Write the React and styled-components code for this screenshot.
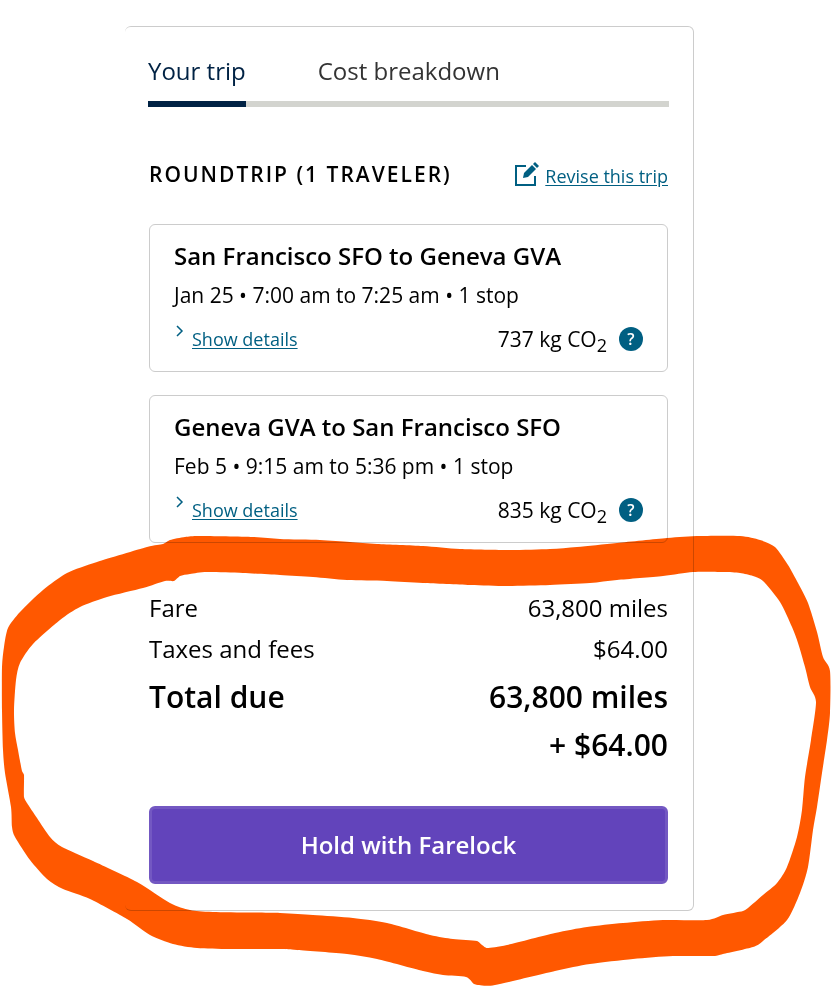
import React from 'react';
import styled, { createGlobalStyle } from 'styled-components';

const colors = {
  navy: '#002244',
  teal: '#005f82',
  text: '#000000',
  textTab: '#333333',
  border: '#cccccc',
  track: '#d3d4cf',
  purple: '#6244bb',
  purpleLight: '#7358c2',
  ink: '#ff5800',
};

const GlobalStyle = createGlobalStyle`
  * {
    box-sizing: border-box;
  }

  body {
    margin: 0;
    background: #ffffff;
    color: ${colors.text};
    font-family: 'Open Sans', 'Noto Sans', sans-serif;
    font-weight: 400;
  }
`;

const Page = styled.div`
  position: relative;
  padding: 26px 137px 75px 125px;
`;

const Card = styled.main`
  padding: 24px 24px 26px 23px;
  border: 1px solid ${colors.border};
  border-left: none;
  border-radius: 6px;
`;

const Tabs = styled.div`
  display: flex;
  gap: 72px;
  box-shadow: inset 0 -6px ${colors.track};
`;

const Tab = styled.button`
  height: 56px;
  padding: 0 0 10px;
  background: none;
  border: none;
  border-bottom: 6px solid ${({ $active }) => ($active ? colors.navy : 'transparent')};
  color: ${({ $active }) => ($active ? colors.navy : colors.textTab)};
  font: inherit;
  font-size: 24px;
  line-height: 36px;
  white-space: nowrap;
  cursor: pointer;
`;

const Body = styled.div`
  padding: 0 1px;
`;

const TripHeader = styled.div`
  display: flex;
  align-items: center;
  justify-content: space-between;
  padding: 51px 0 34px;
`;

const TripTitle = styled.h2`
  margin: 0;
  font-size: 21px;
  font-weight: 600;
  line-height: 32px;
  letter-spacing: 2px;
  text-transform: uppercase;
`;

const Link = styled.a`
  color: ${colors.teal};
  font-size: 18px;
  line-height: 30px;
  text-decoration: underline;
  text-underline-offset: 2px;
`;

const ReviseLink = styled(Link)`
  display: flex;
  align-items: flex-end;
  gap: 6px;
  padding-top: 4px;
  line-height: 28px;

  svg {
    flex: none;
    margin-bottom: 4px;
  }
`;

const Legs = styled.div`
  display: flex;
  flex-direction: column;
  gap: 23px;
`;

const Leg = styled.section`
  padding: 13px 24px 9px;
  border: 1px solid ${colors.border};
  border-radius: 6px;
`;

const LegTitle = styled.h3`
  margin: 0;
  font-size: 24px;
  font-weight: 600;
  line-height: 36px;
`;

const LegTimes = styled.p`
  margin: 0;
  font-size: 21px;
  line-height: 42px;
`;

const LegFooter = styled.div`
  display: flex;
  align-items: center;
  justify-content: space-between;
  height: 46px;
`;

const Details = styled.div`
  display: flex;
  align-items: center;
  gap: 6px;

  svg {
    align-self: flex-start;
  }
`;

const Emissions = styled.div`
  display: flex;
  align-items: center;
  gap: 12px;
  font-size: 21px;
  line-height: 24px;

  sub {
    font-size: 18px;
    line-height: 0;
  }
`;

const HelpButton = styled.button`
  width: 24px;
  height: 24px;
  padding: 0;
  background: ${colors.teal};
  border: none;
  border-radius: 50%;
  color: #ffffff;
  font: inherit;
  font-size: 16px;
  font-weight: 600;
  line-height: 24px;
  cursor: pointer;
`;

const Prices = styled.dl`
  margin: 0;
  padding: 44px 0 37px;
`;

const PriceRow = styled.div`
  display: flex;
  justify-content: space-between;
  font-size: ${({ $total }) => ($total ? '30px' : '24px')};
  font-weight: ${({ $total }) => ($total ? 600 : 400)};
  line-height: ${({ $total }) => ($total ? '48px' : '41px')};
  padding-top: ${({ $total }) => ($total ? '4px' : '0')};

  dd {
    margin: 0;
    text-align: right;
  }

  span {
    display: block;
  }
`;

const HoldButton = styled.button`
  display: block;
  width: 100%;
  height: 78px;
  padding: 0 0 2px;
  background: ${colors.purple};
  border: 3px solid ${colors.purpleLight};
  border-radius: 6px;
  color: #ffffff;
  font: inherit;
  font-size: 24px;
  font-weight: 600;
  cursor: pointer;
`;

const Ink = styled.svg`
  position: absolute;
  top: 0;
  left: 0;
  width: 100%;
  pointer-events: none;
  mix-blend-mode: multiply;
`;

const outerEdge = [
  [200, 536], [185, 537], [170, 540], [163, 544], [147, 547], [97, 562], [67, 573], [43, 590],
  [20, 612], [8, 628], [4, 647], [2, 667], [2, 710], [3, 750], [5, 773], [11, 807], [12, 827],
  [15, 837], [30, 860], [47, 879], [63, 889], [90, 899], [127, 919], [150, 935], [173, 944],
  [197, 948], [230, 949], [280, 949], [297, 950], [347, 954], [377, 959], [423, 971], [443, 975],
  [466, 977], [474, 984], [479, 985], [495, 985], [555, 971], [590, 964], [633, 959], [673, 956],
  [713, 956], [723, 954], [753, 947], [763, 941], [787, 920], [800, 893], [808, 867], [813, 830],
  [817, 807], [822, 773], [827, 740], [830, 713], [830, 671], [823, 657], [817, 632], [808, 603],
  [798, 583], [788, 565], [775, 547], [760, 540], [740, 536], [700, 536], [667, 538], [617, 543],
  [577, 547], [550, 549], [510, 550], [460, 549], [423, 546], [377, 544], [350, 542], [320, 540],
  [280, 539], [253, 537],
];

const innerEdge = [
  [280, 575], [243, 573], [207, 572], [190, 574], [180, 576], [174, 581], [165, 581], [143, 588],
  [107, 597], [80, 607], [60, 620], [33, 644], [20, 663], [16, 680], [14, 710], [15, 733],
  [18, 750], [22, 771], [24, 775], [24, 797], [27, 803], [37, 818], [50, 837], [62, 847],
  [93, 861], [137, 882], [170, 903], [190, 910], [213, 912], [280, 913], [313, 915], [353, 918],
  [387, 923], [430, 935], [453, 939], [477, 941], [482, 945], [487, 948], [507, 945], [555, 933],
  [587, 927], [623, 923], [663, 920], [707, 920], [723, 915], [743, 911], [748, 908], [763, 895],
  [777, 883], [787, 867], [797, 837], [802, 810], [805, 777], [811, 740], [816, 702], [810, 687],
  [805, 667], [798, 643], [792, 627], [780, 602], [763, 581], [753, 576], [740, 573], [723, 572],
  [693, 572], [663, 576], [617, 580], [590, 583], [550, 585], [507, 586], [470, 585], [423, 583],
  [387, 581], [347, 580], [313, 577],
];

// closed smooth curve through every point
const smooth = (points) => {
  const at = (i) => points[(i + points.length) % points.length];
  const curves = points.map((p, i) => {
    const prev = at(i - 1);
    const next = at(i + 1);
    const after = at(i + 2);
    // short steps are corners, a long tangent there would overshoot
    const reach = Math.hypot(next[0] - p[0], next[1] - p[1]) < 9 ? 20 : 8;
    const c1 = [p[0] + (next[0] - prev[0]) / reach, p[1] + (next[1] - prev[1]) / reach];
    const c2 = [next[0] - (after[0] - p[0]) / reach, next[1] - (after[1] - p[1]) / reach];
    return `C${c1} ${c2} ${next}`;
  });
  return `M${points[0]}${curves.join('')}Z`;
};

const legs = [
  { title: 'San Francisco SFO to Geneva GVA', times: 'Jan 25 • 7:00 am to 7:25 am • 1 stop', co2: 737 },
  { title: 'Geneva GVA to San Francisco SFO', times: 'Feb 5 • 9:15 am to 5:36 pm • 1 stop', co2: 835 },
];

const EditIcon = () => (
  <svg width="24" height="24" viewBox="0 0 24 24" fill="none" aria-hidden="true">
    <path d="M11 4H1v19h19v-9" stroke={colors.teal} strokeWidth="2" />
    <path d="M8 16l1-5 8-8 4 4-8 8z" fill={colors.teal} />
    <path d="M18 2l2-2 4 4-2 2z" fill={colors.teal} />
  </svg>
);

const Chevron = () => (
  <svg width="12" height="14" viewBox="0 0 12 14" fill="none" aria-hidden="true">
    <path d="M3 2l5 5-5 5" stroke={colors.teal} strokeWidth="1.500" />
  </svg>
);

const App = () => (
  <Page>
    <GlobalStyle />
    <Card>
      <Tabs role="tablist">
        <Tab type="button" role="tab" aria-selected="true" $active>
          Your trip
        </Tab>
        <Tab type="button" role="tab" aria-selected="false">
          Cost breakdown
        </Tab>
      </Tabs>

      <Body>
        <TripHeader>
          <TripTitle>Roundtrip (1 traveler)</TripTitle>
          <ReviseLink href="#revise">
            <EditIcon />
            Revise this trip
          </ReviseLink>
        </TripHeader>

        <Legs>
          {legs.map((leg) => (
            <Leg key={leg.title}>
              <LegTitle>{leg.title}</LegTitle>
              <LegTimes>{leg.times}</LegTimes>
              <LegFooter>
                <Details>
                  <Chevron />
                  <Link href="#details">Show details</Link>
                </Details>
                <Emissions>
                  <span>
                    {leg.co2} kg CO<sub>2</sub>
                  </span>
                  <HelpButton type="button" aria-label="About carbon emissions">
                    ?
                  </HelpButton>
                </Emissions>
              </LegFooter>
            </Leg>
          ))}
        </Legs>

        <Prices>
          <PriceRow>
            <dt>Fare</dt>
            <dd>63,800 miles</dd>
          </PriceRow>
          <PriceRow>
            <dt>Taxes and fees</dt>
            <dd>$64.00</dd>
          </PriceRow>
          <PriceRow $total>
            <dt>Total due</dt>
            <dd>
              <span>63,800 miles</span>
              <span>+ $64.00</span>
            </dd>
          </PriceRow>
        </Prices>

        <HoldButton type="button">Hold with Farelock</HoldButton>
      </Body>
    </Card>

    <Ink viewBox="0 0 831 986" aria-hidden="true">
      <path d={smooth(outerEdge) + smooth(innerEdge)} fill={colors.ink} fillRule="evenodd" />
    </Ink>
  </Page>
);

export default App;
